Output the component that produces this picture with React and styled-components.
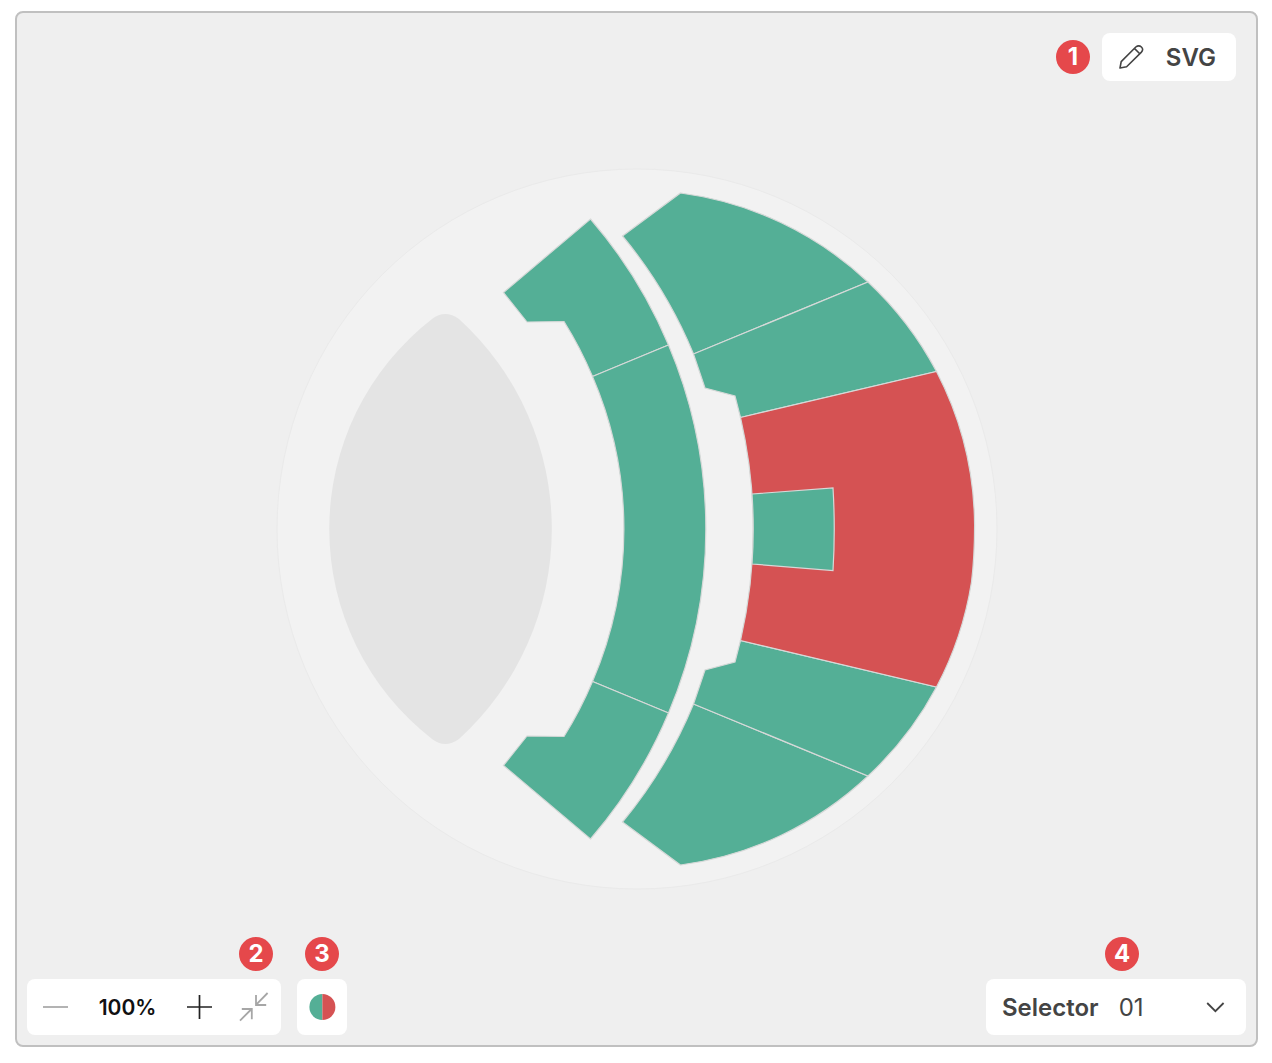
import React, { useState } from "react";
import styled, { createGlobalStyle } from "styled-components";

const GREEN = "#54af96";
const RED = "#d55253";

const GlobalStyle = createGlobalStyle`
  *, *::before, *::after { box-sizing: border-box; }
  body {
    margin: 0;
    background: #fff;
    color: #444;
    font-family: Inter, "Liberation Sans", sans-serif;
  }
  button, select { font: inherit; color: inherit; }
`;

const Page = styled.main`
  min-height: 100vh;
  padding: 11px 14px 16px 15px;
  display: flex;
`;

const Frame = styled.section`
  flex: 1;
  min-width: 0;
  display: grid;
  grid-template-rows: 1fr auto 1fr;
  border: 2px solid #c0c0c0;
  border-radius: 8px;
  background: #efefef;
`;

const TopBar = styled.header`
  display: flex;
  justify-content: flex-end;
  align-items: center;
  align-self: start;
  gap: 12px;
  padding: 20px;
`;

const BottomBar = styled.footer`
  display: flex;
  justify-content: space-between;
  align-items: flex-end;
  align-self: end;
  padding: 10px;
`;

const Tools = styled.div`
  display: flex;
  gap: 16px;
`;

const Labelled = styled.div`
  display: flex;
  flex-direction: column;
  align-items: ${(p) => p.$align || "center"};
  gap: 8px;
`;

const Badge = styled.span`
  display: flex;
  align-items: center;
  justify-content: center;
  width: 34px;
  height: 34px;
  margin: ${(p) => p.$margin || "0"};
  border-radius: 50%;
  background: #e5484b;
  color: #fff;
  font-size: 24px;
  line-height: 32px;
  font-weight: 700;
`;

const ModeButton = styled.button`
  display: flex;
  align-items: center;
  justify-content: space-between;
  width: 134px;
  height: 48px;
  padding: 0 20px 0 16px;
  border: 0;
  border-radius: 8px;
  background: #fff;
  font-size: 24px;
  font-weight: 600;
`;

const ZoomGroup = styled.div`
  display: grid;
  grid-template-columns: 57px 87px 57px 53px;
  align-items: center;
  height: 56px;
  border-radius: 8px;
  background: #fff;
`;

const IconButton = styled.button`
  display: flex;
  align-items: center;
  justify-content: center;
  height: 56px;
  padding: 0;
  border: 0;
  background: none;
  color: ${(p) => (p.$muted ? "#a6a6a6" : "#222")};
`;

const ZoomValue = styled.output`
  color: #111;
  text-align: center;
  font-size: 21px;
  font-weight: 600;
`;

const ColorButton = styled.button`
  display: flex;
  align-items: center;
  justify-content: center;
  width: 50px;
  height: 56px;
  padding: 0;
  border: 0;
  border-radius: 8px;
  background: #fff;
`;

const Picker = styled.div`
  display: flex;
  align-items: center;
  gap: 20px;
  width: 260px;
  height: 56px;
  padding: 0 20px 0 16px;
  border-radius: 8px;
  background: #fff;
  font-size: 24px;
`;

const PickerLabel = styled.label`
  font-weight: 600;
`;

const PickerField = styled.div`
  flex: 1;
  display: grid;
  grid-template-columns: 1fr 20px;
  align-items: center;

  svg {
    grid-area: 1 / 2;
    pointer-events: none;
  }
`;

const PickerSelect = styled.select`
  grid-area: 1 / 1 / 2 / 3;
  width: 100%;
  height: 56px;
  padding: 0;
  border: 0;
  appearance: none;
  background: none;
`;

const Drawing = styled.svg`
  display: block;
  width: 722px;
  max-width: 100%;
  height: auto;
  justify-self: center;
`;

const icon = { fill: "none", stroke: "currentColor", "aria-hidden": true };

const PencilIcon = () => (
  <svg width="26" height="26" viewBox="0 0 26 26" strokeWidth="1.6" strokeLinejoin="round" {...icon}>
    <path d="M2 24 3.2 17.6 17.8 3Q20.8.6 23.4 3T23.2 8.4L8.6 22.8Z M16.4 4.4l5.4 5.4" />
  </svg>
);

const MinusIcon = () => (
  <svg width="25" height="26" viewBox="0 0 25 26" strokeWidth="1.7" {...icon}>
    <path d="M0 13h25" />
  </svg>
);

const PlusIcon = () => (
  <svg width="25" height="26" viewBox="0 0 25 26" strokeWidth="1.7" {...icon}>
    <path d="M0 13h25M12.5 1v24" />
  </svg>
);

const FitIcon = () => (
  <svg width="32" height="32" viewBox="0 0 32 32" strokeWidth="1.8" {...icon}>
    <path d="M28.6 2 17.2 13.6M17 4v10h10.2M1 29.6 12.6 18M2.8 18h10v10.2" />
  </svg>
);

const ChevronIcon = () => (
  <svg width="20" height="20" viewBox="0 0 20 20" strokeWidth="1.8" {...icon}>
    <path d="M1.2 6l8.2 8.2L17.6 6" />
  </svg>
);

const ColorIcon = () => (
  <svg width="28" height="28" viewBox="0 0 28 28" aria-hidden="true">
    <path d="M14.4 1a13 13 0 0 0 0 26Z" fill={GREEN} />
    <path d="M14.4 1a13 13 0 0 1 0 26Z" fill={RED} />
  </svg>
);

const SEGMENTS = [
  { fill: GREEN, d: "M503.5 292.5 590.5 219A472 472 0 0 1 668.5 345L592.5 376.5A386 386 0 0 0 564 321.5L527 322Z" },
  { fill: GREEN, d: "M668.5 345A472 472 0 0 1 668.5 713L592.5 681.5A386 386 0 0 0 592.5 376.5Z" },
  { fill: GREEN, d: "M503.5 765.5 590.5 839A472 472 0 0 0 668.5 713L592.5 681.5A386 386 0 0 1 564 736.5L527 736Z" },
  { fill: GREEN, d: "M622.5 236 680.5 193A338 338 0 0 1 868 282L693.5 354A459 459 0 0 0 622.5 236Z" },
  { fill: GREEN, d: "M868 282A338 338 0 0 1 936.5 371.5L740.5 417.5 735 396 705 388 693.5 354Z" },
  { fill: GREEN, d: "M622.5 822 680.5 865A338 338 0 0 0 868 776L693.5 704A459 459 0 0 1 622.5 822Z" },
  { fill: GREEN, d: "M868 776A338 338 0 0 0 936.5 687L740.5 640.5 735 662 705 670 693.5 704Z" },
  { fill: RED, d: "M740.5 417.5 936.5 371.5A338 338 0 0 1 974.6 525Q974.6 556 971.5 582A338 338 0 0 1 936.5 687L740.5 640.5A500 500 0 0 0 740.5 417.5Z" },
  { fill: GREEN, d: "M752 494 833 488Q835.5 529 833 570.5L752 564A500 500 0 0 0 752 494Z" },
];

const EyeDrawing = () => (
  <Drawing viewBox="276 166 722 726" role="img" aria-label="Sectors">
    <circle cx="637" cy="529" r="360" fill="#f2f2f2" stroke="#eaeaea" />
    <path
      d="M432 319Q445 309 459 319A284 284 0 0 1 459 739Q445 749 432 739A266 266 0 0 1 432 319Z"
      fill="#e4e4e4"
    />
    {SEGMENTS.map((s) => (
      <path key={s.d} d={s.d} fill={s.fill} stroke="#d6d9d8" strokeWidth="1.2" />
    ))}
  </Drawing>
);

export default function App() {
  const [zoom, setZoom] = useState(100);
  return (
    <Page>
      <GlobalStyle />
      <Frame>
        <TopBar>
          <Badge>1</Badge>
          <ModeButton type="button">
            <PencilIcon />
            SVG
          </ModeButton>
        </TopBar>
        <EyeDrawing />
        <BottomBar>
          <Tools>
            <Labelled $align="flex-end">
              <Badge $margin="0 8px 0 0">2</Badge>
              <ZoomGroup>
                <IconButton $muted type="button" aria-label="Zoom out" onClick={() => setZoom(Math.max(100, zoom - 10))}>
                  <MinusIcon />
                </IconButton>
                <ZoomValue>{zoom}%</ZoomValue>
                <IconButton type="button" aria-label="Zoom in" onClick={() => setZoom(zoom + 10)}>
                  <PlusIcon />
                </IconButton>
                <IconButton $muted type="button" aria-label="Fit" onClick={() => setZoom(100)}>
                  <FitIcon />
                </IconButton>
              </ZoomGroup>
            </Labelled>
            <Labelled>
              <Badge>3</Badge>
              <ColorButton type="button" aria-label="Colors">
                <ColorIcon />
              </ColorButton>
            </Labelled>
          </Tools>
          <Labelled>
            <Badge $margin="0 0 0 12px">4</Badge>
            <Picker>
              <PickerLabel htmlFor="selector">Selector</PickerLabel>
              <PickerField>
                <PickerSelect id="selector" defaultValue="01">
                  <option>01</option>
                </PickerSelect>
                <ChevronIcon />
              </PickerField>
            </Picker>
          </Labelled>
        </BottomBar>
      </Frame>
    </Page>
  );
}
